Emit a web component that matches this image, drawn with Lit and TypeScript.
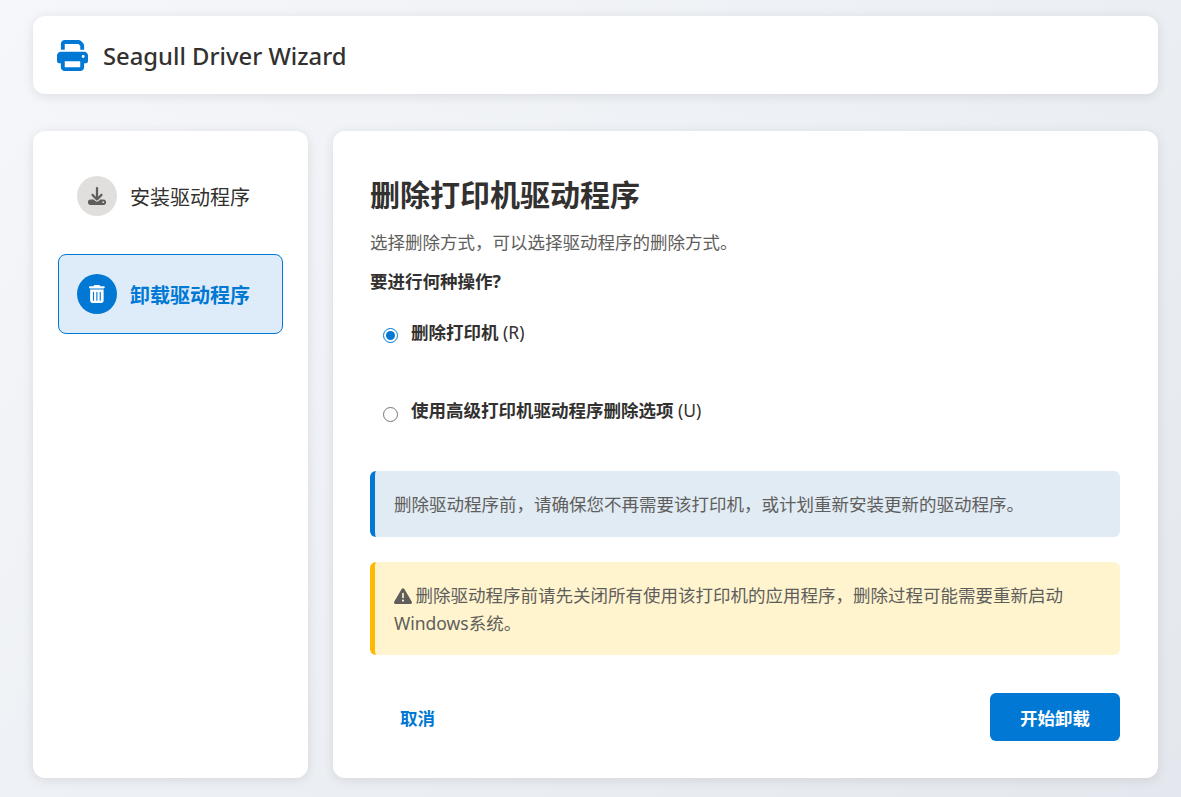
import { LitElement, html, css, svg } from "lit";
import { customElement, state } from "lit/decorators.js";

const printIcon = svg`<path d="M128 0C92.7 0 64 28.7 64 64v96h64V64H354.7L384 93.3V160h64V93.3c0-17-6.7-33.3-18.7-45.3L400 18.7C388 6.7 371.7 0 354.7 0H128zM384 352v32 64H128V384 368 352H384zm64 32h32c17.7 0 32-14.3 32-32V256c0-35.3-28.7-64-64-64H64c-35.3 0-64 28.7-64 64v96c0 17.7 14.3 32 32 32H64v64c0 35.3 28.7 64 64 64H384c35.3 0 64-28.7 64-64V384zM432 248a24 24 0 1 1 0 48 24 24 0 1 1 0-48z"/>`;
const downloadIcon = svg`<path d="M288 32c0-17.7-14.3-32-32-32s-32 14.3-32 32V274.7l-73.4-73.4c-12.5-12.5-32.8-12.5-45.3 0s-12.5 32.8 0 45.3l128 128c12.5 12.5 32.8 12.5 45.3 0l128-128c12.5-12.5 12.5-32.8 0-45.3s-32.8-12.5-45.3 0L288 274.7V32zM64 352c-35.3 0-64 28.7-64 64v32c0 35.3 28.7 64 64 64H448c35.3 0 64-28.7 64-64V416c0-35.3-28.7-64-64-64H346.5l-45.3 45.3c-25 25-65.5 25-90.5 0L165.5 352H64zm368 56a24 24 0 1 1 0 48 24 24 0 1 1 0-48z"/>`;
const trashIcon = svg`<path d="M135.2 17.7C140.6 6.8 151.7 0 163.8 0H284.2c12.1 0 23.2 6.8 28.6 17.7L320 32h96c17.7 0 32 14.3 32 32s-14.3 32-32 32H32C14.3 96 0 81.7 0 64S14.3 32 32 32h96l7.2-14.3zM32 128H416V448c0 35.3-28.7 64-64 64H96c-35.3 0-64-28.7-64-64V128zm96 64c-8.8 0-16 7.2-16 16V432c0 8.8 7.2 16 16 16s16-7.2 16-16V208c0-8.8-7.2-16-16-16zm96 0c-8.8 0-16 7.2-16 16V432c0 8.8 7.2 16 16 16s16-7.2 16-16V208c0-8.8-7.2-16-16-16zm96 0c-8.8 0-16 7.2-16 16V432c0 8.8 7.2 16 16 16s16-7.2 16-16V208c0-8.8-7.2-16-16-16z"/>`;
const warnIcon = svg`<path d="M256 32c14.2 0 27.3 7.5 34.5 19.8l216 368c7.3 12.4 7.3 27.7 .2 40.1S486.3 480 472 480H40c-14.3 0-27.6-7.7-34.7-20.1s-7-27.8 .2-40.1l216-368C228.7 39.5 241.8 32 256 32zm0 128c-13.3 0-24 10.7-24 24V296c0 13.3 10.7 24 24 24s24-10.7 24-24V184c0-13.3-10.7-24-24-24zm32 224a32 32 0 1 0 -64 0 32 32 0 1 0 64 0z"/>`;

@customElement("app-root")
export class AppRoot extends LitElement {
  @state() private choice = "remove";

  private renderStep(label: string, icon: unknown, width: number, active: boolean) {
    return html`
      <div class="step ${active ? "active" : ""}">
        <span class="step-icon">
          <svg viewBox="0 0 ${width} 512" fill="currentColor">${icon}</svg>
        </span>
        <span class="step-label">${label}</span>
      </div>
    `;
  }

  private renderOption(value: string, label: string, key: string) {
    return html`
      <label class="option">
        <input
          type="radio"
          name="op"
          value=${value}
          ?checked=${this.choice === value}
          @change=${() => (this.choice = value)}
        />
        <span><b>${label}</b> ${key}</span>
      </label>
    `;
  }

  render() {
    return html`
      <header class="card header">
        <svg class="logo" viewBox="0 0 512 512" fill="currentColor">${printIcon}</svg>
        <h1>Seagull Driver Wizard</h1>
      </header>
      <div class="main">
        <nav class="card sidebar">
          ${this.renderStep("安装驱动程序", downloadIcon, 512, false)}
          ${this.renderStep("卸载驱动程序", trashIcon, 448, true)}
        </nav>
        <section class="card content">
          <h2>删除打印机驱动程序</h2>
          <p class="sub">选择删除方式，可以选择驱动程序的删除方式。</p>
          <p class="question">要进行何种操作?</p>
          <div class="options">
            ${this.renderOption("remove", "删除打印机", "(R)")}
            ${this.renderOption("advanced", "使用高级打印机驱动程序删除选项", "(U)")}
          </div>
          <div class="alert info">删除驱动程序前，请确保您不再需要该打印机，或计划重新安装更新的驱动程序。</div>
          <div class="alert warn">
            <svg class="warn-icon" viewBox="0 0 512 512" fill="currentColor">${warnIcon}</svg>
            删除驱动程序前请先关闭所有使用该打印机的应用程序，删除过程可能需要重新启动Windows系统。
          </div>
          <div class="footer">
            <button class="btn ghost">取消</button>
            <button class="btn primary">开始卸载</button>
          </div>
        </section>
      </div>
    `;
  }

  static styles = css`
    :host {
      display: flex;
      flex-direction: column;
      box-sizing: border-box;
      height: 797px;
      padding: 16px 23px 19px 33px;
      gap: 37px;
      overflow: hidden;
      background: linear-gradient(135deg, #f5f7fa 0%, #e4e8ee 100%);
      color: #323130;
      font-family: "Noto Sans", "Noto Sans CJK SC", sans-serif;
    }
    .card {
      background: #fff;
      border-radius: 12px;
      box-shadow: 0 2px 12px rgba(0, 0, 0, 0.1);
    }
    .header {
      display: flex;
      align-items: center;
      gap: 15px;
      height: 78px;
      padding: 0 24px;
      flex: none;
    }
    .logo {
      width: 31px;
      height: 31px;
      color: #0078d4;
    }
    h1 {
      margin: 2px 0 0;
      font-size: 23.8px;
      font-weight: 500;
      line-height: 32px;
    }
    .main {
      display: flex;
      gap: 25px;
      flex: 1;
      min-height: 0;
    }
    .sidebar {
      width: 275px;
      box-sizing: border-box;
      padding: 25px;
      display: flex;
      flex-direction: column;
      gap: 18px;
    }
    .step {
      display: flex;
      align-items: center;
      gap: 13px;
      height: 80px;
      box-sizing: border-box;
      padding: 0 18px;
      border: 1px solid transparent;
      border-radius: 8px;
      font-size: 20px;
    }
    .step.active {
      background: #deecf9;
      border-color: #0078d4;
      color: #0078d4;
      font-weight: 700;
    }
    .step-icon {
      width: 40px;
      height: 40px;
      border-radius: 50%;
      background: #e1dfdd;
      color: #605e5c;
      display: flex;
      align-items: center;
      justify-content: center;
      flex: none;
    }
    .step-icon svg {
      height: 18px;
    }
    .step.active .step-icon {
      background: #0078d4;
      color: #fff;
    }
    .content {
      flex: 1;
      box-sizing: border-box;
      padding: 37px 38px 37px 37px;
      display: flex;
      flex-direction: column;
    }
    h2 {
      margin: 0;
      font-size: 30px;
      font-weight: 700;
      line-height: 54px;
    }
    .sub {
      margin: 6px 0 0;
      font-size: 17.5px;
      line-height: 28px;
      color: #605e5c;
    }
    .question {
      margin: 11px 0 0;
      font-size: 17.5px;
      line-height: 28px;
      font-weight: 700;
    }
    .options {
      margin: 1px 0 18.6px;
    }
    .option {
      display: flex;
      align-items: flex-start;
      gap: 13px;
      height: 78.2px;
      box-sizing: border-box;
      padding: 24px 13px 0;
      font-size: 17.5px;
      line-height: 24px;
    }
    .option input {
      width: 15px;
      height: 15px;
      margin: 8.4px 0 0;
      accent-color: #0078d4;
      flex: none;
    }
    .option b {
      font-weight: 700;
    }
    .alert {
      box-sizing: border-box;
      padding: 19px 19px 19px;
      border-left: 5px solid;
      border-radius: 6px;
      font-size: 17.5px;
      line-height: 28px;
      color: #605e5c;
    }
    .info {
      background: #e1ebf4;
      border-color: #0078d4;
    }
    .warn {
      margin-top: 25px;
      padding-bottom: 18px;
      background: #fff4ce;
      border-color: #ffb900;
    }
    .warn-icon {
      width: 18px;
      height: 18px;
      margin-right: -1px;
      vertical-align: -3px;
    }
    .footer {
      margin-top: auto;
      display: flex;
      justify-content: space-between;
    }
    .btn {
      height: 48px;
      padding: 0 30px;
      border: none;
      border-radius: 6px;
      font: inherit;
      font-size: 17.5px;
      font-weight: 700;
      cursor: pointer;
    }
    .ghost {
      background: transparent;
      color: #0078d4;
    }
    .primary {
      background: #0078d4;
      color: #fff;
    }
  `;
}

declare global {
  interface HTMLElementTagNameMap {
    "app-root": AppRoot;
  }
}
